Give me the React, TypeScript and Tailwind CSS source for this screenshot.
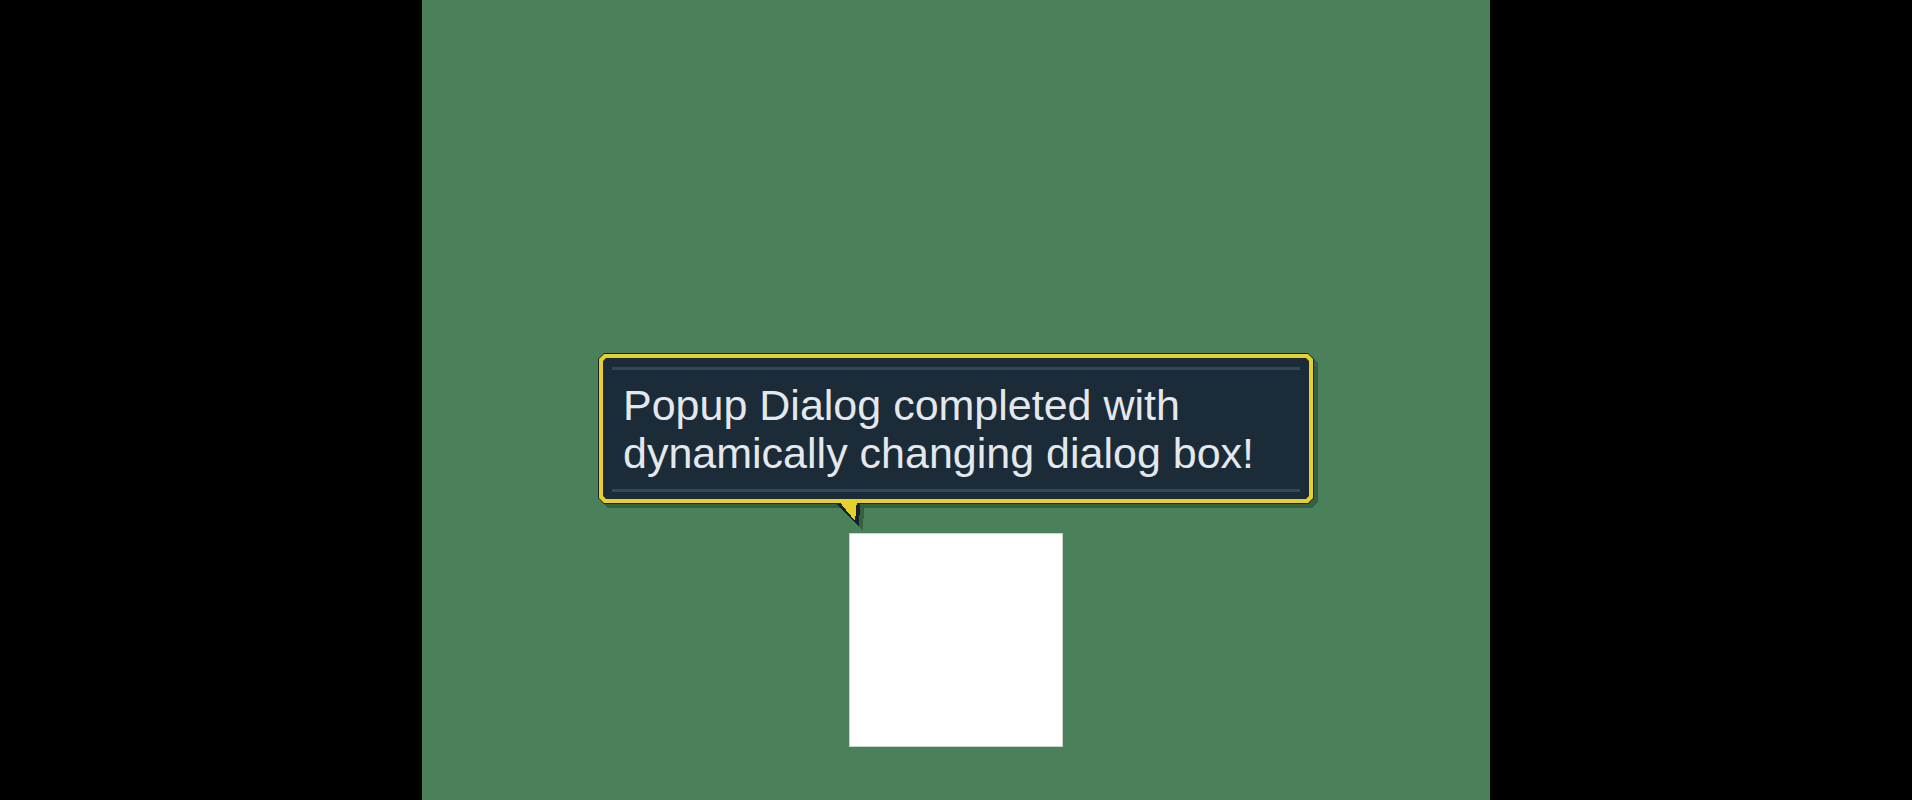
const outlineClip =
  "[clip-path:polygon(6px_0,calc(100%_-_6px)_0,100%_6px,100%_calc(100%_-_6px),calc(100%_-_6px)_100%,6px_100%,0_calc(100%_-_6px),0_6px)]";
const borderClip =
  "[clip-path:polygon(5px_0,calc(100%_-_5px)_0,100%_5px,100%_calc(100%_-_5px),calc(100%_-_5px)_100%,5px_100%,0_calc(100%_-_5px),0_5px)]";
const fillClip =
  "[clip-path:polygon(3px_0,calc(100%_-_3px)_0,100%_3px,100%_calc(100%_-_3px),calc(100%_-_3px)_100%,3px_100%,0_calc(100%_-_3px),0_3px)]";

function DialogTail() {
  return (
    <svg
      className="absolute left-[238px] top-[147px]"
      width="28"
      height="30"
      viewBox="0 0 28 30"
      shapeRendering="crispEdges"
    >
      <polygon points="0,3 24,3 23,27" fill="#16222c" />
      <polygon points="2,0 21,0 19,21" fill="#e6d12c" />
    </svg>
  );
}

function PopupDialog({ lines }: { lines: string[] }) {
  return (
    <div className="relative ml-[176px] w-[716px] [filter:drop-shadow(4px_4px_0_rgba(0,0,0,0.25))]">
      <div className={`bg-[#16222c] p-[1px] ${outlineClip}`}>
        <div className={`bg-[#e6d12c] p-[4px] ${borderClip}`}>
          <div className={`bg-[#1b2b38] px-[9px] pt-[9px] pb-[7px] ${fillClip}`}>
            <div className="border-y-[3px] border-[#364657] pl-[11px] pt-[11px] pb-[12px]">
              <p className="whitespace-nowrap font-['Liberation_Sans',Arial,sans-serif] text-[43px] leading-[48px] text-[#e4e8ec]">
                {lines.map((line, i) => (
                  <span key={i} className="block">
                    {line}
                  </span>
                ))}
              </p>
            </div>
          </div>
        </div>
      </div>
      <DialogTail />
    </div>
  );
}

export default function App() {
  return (
    <div className="flex h-[800px] w-full justify-center overflow-hidden bg-black">
      <div className="flex h-full w-[1068px] flex-col bg-[#4a805a] pt-[353px]">
        <PopupDialog
          lines={["Popup Dialog completed with", "dynamically changing dialog box!"]}
        />
        <div className="ml-[427px] mt-[29px] h-[214px] w-[214px] border border-[#c9d2cd] bg-white" />
      </div>
    </div>
  );
}
